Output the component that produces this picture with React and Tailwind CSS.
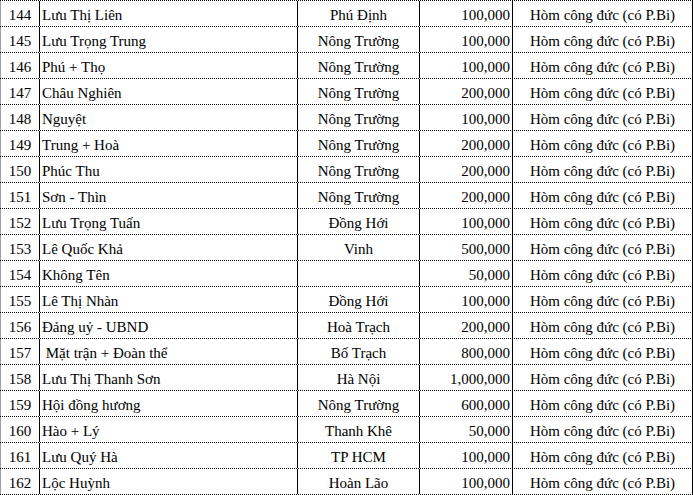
const rows = [
  ["144", "Lưu Thị Liên", "Phú Định", "100,000"],
  ["145", "Lưu Trọng Trung", "Nông Trường", "100,000"],
  ["146", "Phú + Thọ", "Nông Trường", "100,000"],
  ["147", "Châu Nghiên", "Nông Trường", "200,000"],
  ["148", "Nguyệt", "Nông Trường", "100,000"],
  ["149", "Trung + Hoà", "Nông Trường", "200,000"],
  ["150", "Phúc Thu", "Nông Trường", "200,000"],
  ["151", "Sơn - Thìn", "Nông Trường", "200,000"],
  ["152", "Lưu Trọng Tuấn", "Đồng Hới", "100,000"],
  ["153", "Lê Quốc Khả", "Vinh", "500,000"],
  ["154", "Không Tên", "", "50,000"],
  ["155", "Lê Thị Nhàn", "Đồng Hới", "100,000"],
  ["156", "Đảng uỷ - UBND", "Hoà Trạch", "200,000"],
  ["157", "\u00a0Mặt trận + Đoàn thể", "Bố Trạch", "800,000"],
  ["158", "Lưu Thị Thanh Sơn", "Hà Nội", "1,000,000"],
  ["159", "Hội đồng hương", "Nông Trường", "600,000"],
  ["160", "Hào + Lý", "Thanh Khê", "50,000"],
  ["161", "Lưu Quý Hà", "TP HCM", "100,000"],
  ["162", "Lộc Huỳnh", "Hoàn Lão", "100,000"],
];

export default function App() {
  return (
    <div
      className="w-[693px] h-[495px] bg-white text-black text-[15px] leading-none overflow-hidden border-t border-dotted border-black"
      style={{ fontFamily: '"Liberation Serif", "Times New Roman", serif' }}
    >
      {rows.map(([no, name, place, amount]) => (
        <div
          key={no}
          className="grid grid-cols-[40px_258px_122px_93px_180px] h-[26px] border-b border-dotted border-black"
        >
          <div className="flex items-center justify-center border-l border-l-gray-400 border-r border-r-black pt-[4px]">
            {no}
          </div>
          <div className="flex items-center pl-[2px] border-r border-black pt-[4px] whitespace-pre">
            {name}
          </div>
          <div className="flex items-center justify-center border-r border-black pt-[4px]">
            {place}
          </div>
          <div className="flex items-center justify-end pr-[2px] border-r border-black pt-[4px]">
            {amount}
          </div>
          <div className="flex items-center justify-center border-r border-black pt-[4px]">
            Hòm công đức (có P.Bi)
          </div>
        </div>
      ))}
    </div>
  );
}
